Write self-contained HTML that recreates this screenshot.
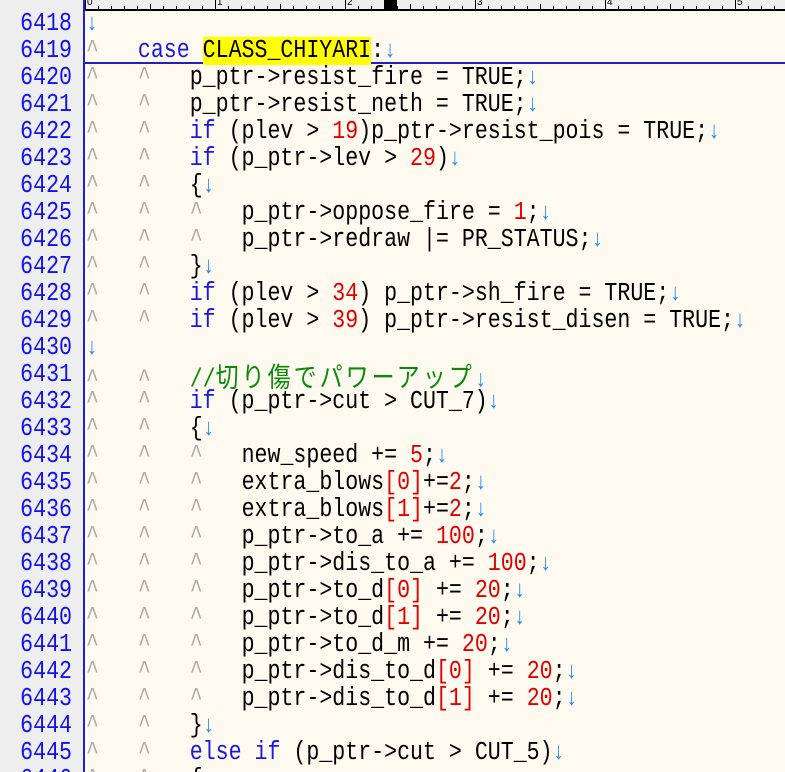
<!DOCTYPE html>
<html><head><meta charset="utf-8"><style>
html,body{margin:0;width:785px;height:772px;overflow:hidden;}
body{background:#fffaef;position:relative;font-family:"Liberation Mono","Noto Sans CJK JP",monospace;}
#gut{position:absolute;left:0;top:0;width:83px;height:772px;background:#eeeeee;border-right:2px solid #2020d0;}
#ruler{position:absolute;left:85px;top:0;width:700px;height:9px;background:#efefef;border-bottom:2px solid #000;}
.tk{position:absolute;bottom:0;width:1px;background:#000;height:3px}
.tk.b{height:9px}
.rn{position:absolute;top:-3px;font:10px "Liberation Sans",sans-serif;color:#000}
.ln{position:absolute;left:0;width:72px;text-align:right;font-size:21.6px;color:#1010ee;height:27px;line-height:27px;transform:scaleY(1.2);}
.c{position:absolute;left:86px;white-space:pre;font-size:21.6px;height:27px;line-height:27px;color:#000;transform:scaleY(1.18);transform-origin:0 50%}
.t{color:#aaa}
.a{color:#1e88ff;font-size:20px}
.k{color:#1818e0}
.n{color:#e00000}
.g{color:#0a8a0a}
.j{font-family:"Noto Sans CJK JP",sans-serif;font-size:23px;letter-spacing:3px}
.h{background:#ffff00}
</style></head><body>
<div id="gut"></div>
<div id="ruler"></div>
<div style="position:absolute;left:384px;top:0;width:13px;height:9px;background:#000"></div>
<div style="position:absolute;left:85px;top:62px;width:700px;height:2px;background:#2020c0"></div>
<script>
var r=document.getElementById('ruler'),h='';
for(var i=0;i<=54;i++){h+='<div class="tk'+(i%10==0?' b':'')+'" style="left:'+(i*13)+'px;'+(i%5==0&&i%10?'height:5px':'')+'"></div>';if(i%10==0)h+='<div class="rn" style="left:'+(i*13+2)+'px">'+(i/10)+'</div>';}
r.innerHTML=h;
var T='<span class="t">^</span>   ',A='<span class="a">↓</span>';
var L=[
A,
T+'<span class="k">case</span> <span class="h">CLASS_CHIYARI</span>:'+A,
T+T+'p_ptr-&gt;resist_fire = TRUE;'+A,
T+T+'p_ptr-&gt;resist_neth = TRUE;'+A,
T+T+'<span class="k">if</span> (plev &gt; <span class="n">19</span>)p_ptr-&gt;resist_pois = TRUE;'+A,
T+T+'<span class="k">if</span> (p_ptr-&gt;lev &gt; <span class="n">29</span>)'+A,
T+T+'{'+A,
T+T+T+'p_ptr-&gt;oppose_fire = <span class="n">1</span>;'+A,
T+T+T+'p_ptr-&gt;redraw |= PR_STATUS;'+A,
T+T+'}'+A,
T+T+'<span class="k">if</span> (plev &gt; <span class="n">34</span>) p_ptr-&gt;sh_fire = TRUE;'+A,
T+T+'<span class="k">if</span> (plev &gt; <span class="n">39</span>) p_ptr-&gt;resist_disen = TRUE;'+A,
A,
T+T+'<span class="g">//<span class="j">切り傷でパワーアップ</span></span>'+A,
T+T+'<span class="k">if</span> (p_ptr-&gt;cut &gt; CUT_7)'+A,
T+T+'{'+A,
T+T+T+'new_speed += <span class="n">5</span>;'+A,
T+T+T+'extra_blows<span class="n">[0]</span>+=<span class="n">2</span>;'+A,
T+T+T+'extra_blows<span class="n">[1]</span>+=<span class="n">2</span>;'+A,
T+T+T+'p_ptr-&gt;to_a += <span class="n">100</span>;'+A,
T+T+T+'p_ptr-&gt;dis_to_a += <span class="n">100</span>;'+A,
T+T+T+'p_ptr-&gt;to_d<span class="n">[0]</span> += <span class="n">20</span>;'+A,
T+T+T+'p_ptr-&gt;to_d<span class="n">[1]</span> += <span class="n">20</span>;'+A,
T+T+T+'p_ptr-&gt;to_d_m += <span class="n">20</span>;'+A,
T+T+T+'p_ptr-&gt;dis_to_d<span class="n">[0]</span> += <span class="n">20</span>;'+A,
T+T+T+'p_ptr-&gt;dis_to_d<span class="n">[1]</span> += <span class="n">20</span>;'+A,
T+T+'}'+A,
T+T+'<span class="k">else if</span> (p_ptr-&gt;cut &gt; CUT_5)'+A,
T+T+'{'+A
];
var o='';
for(var j=0;j<L.length;j++){var y=11+27*j;o+='<div class="ln" style="top:'+y+'px">'+(6418+j)+'</div><div class="c" style="top:'+y+'px">'+L[j]+'</div>';}
document.body.insertAdjacentHTML('beforeend',o);
</script>
</body></html>
